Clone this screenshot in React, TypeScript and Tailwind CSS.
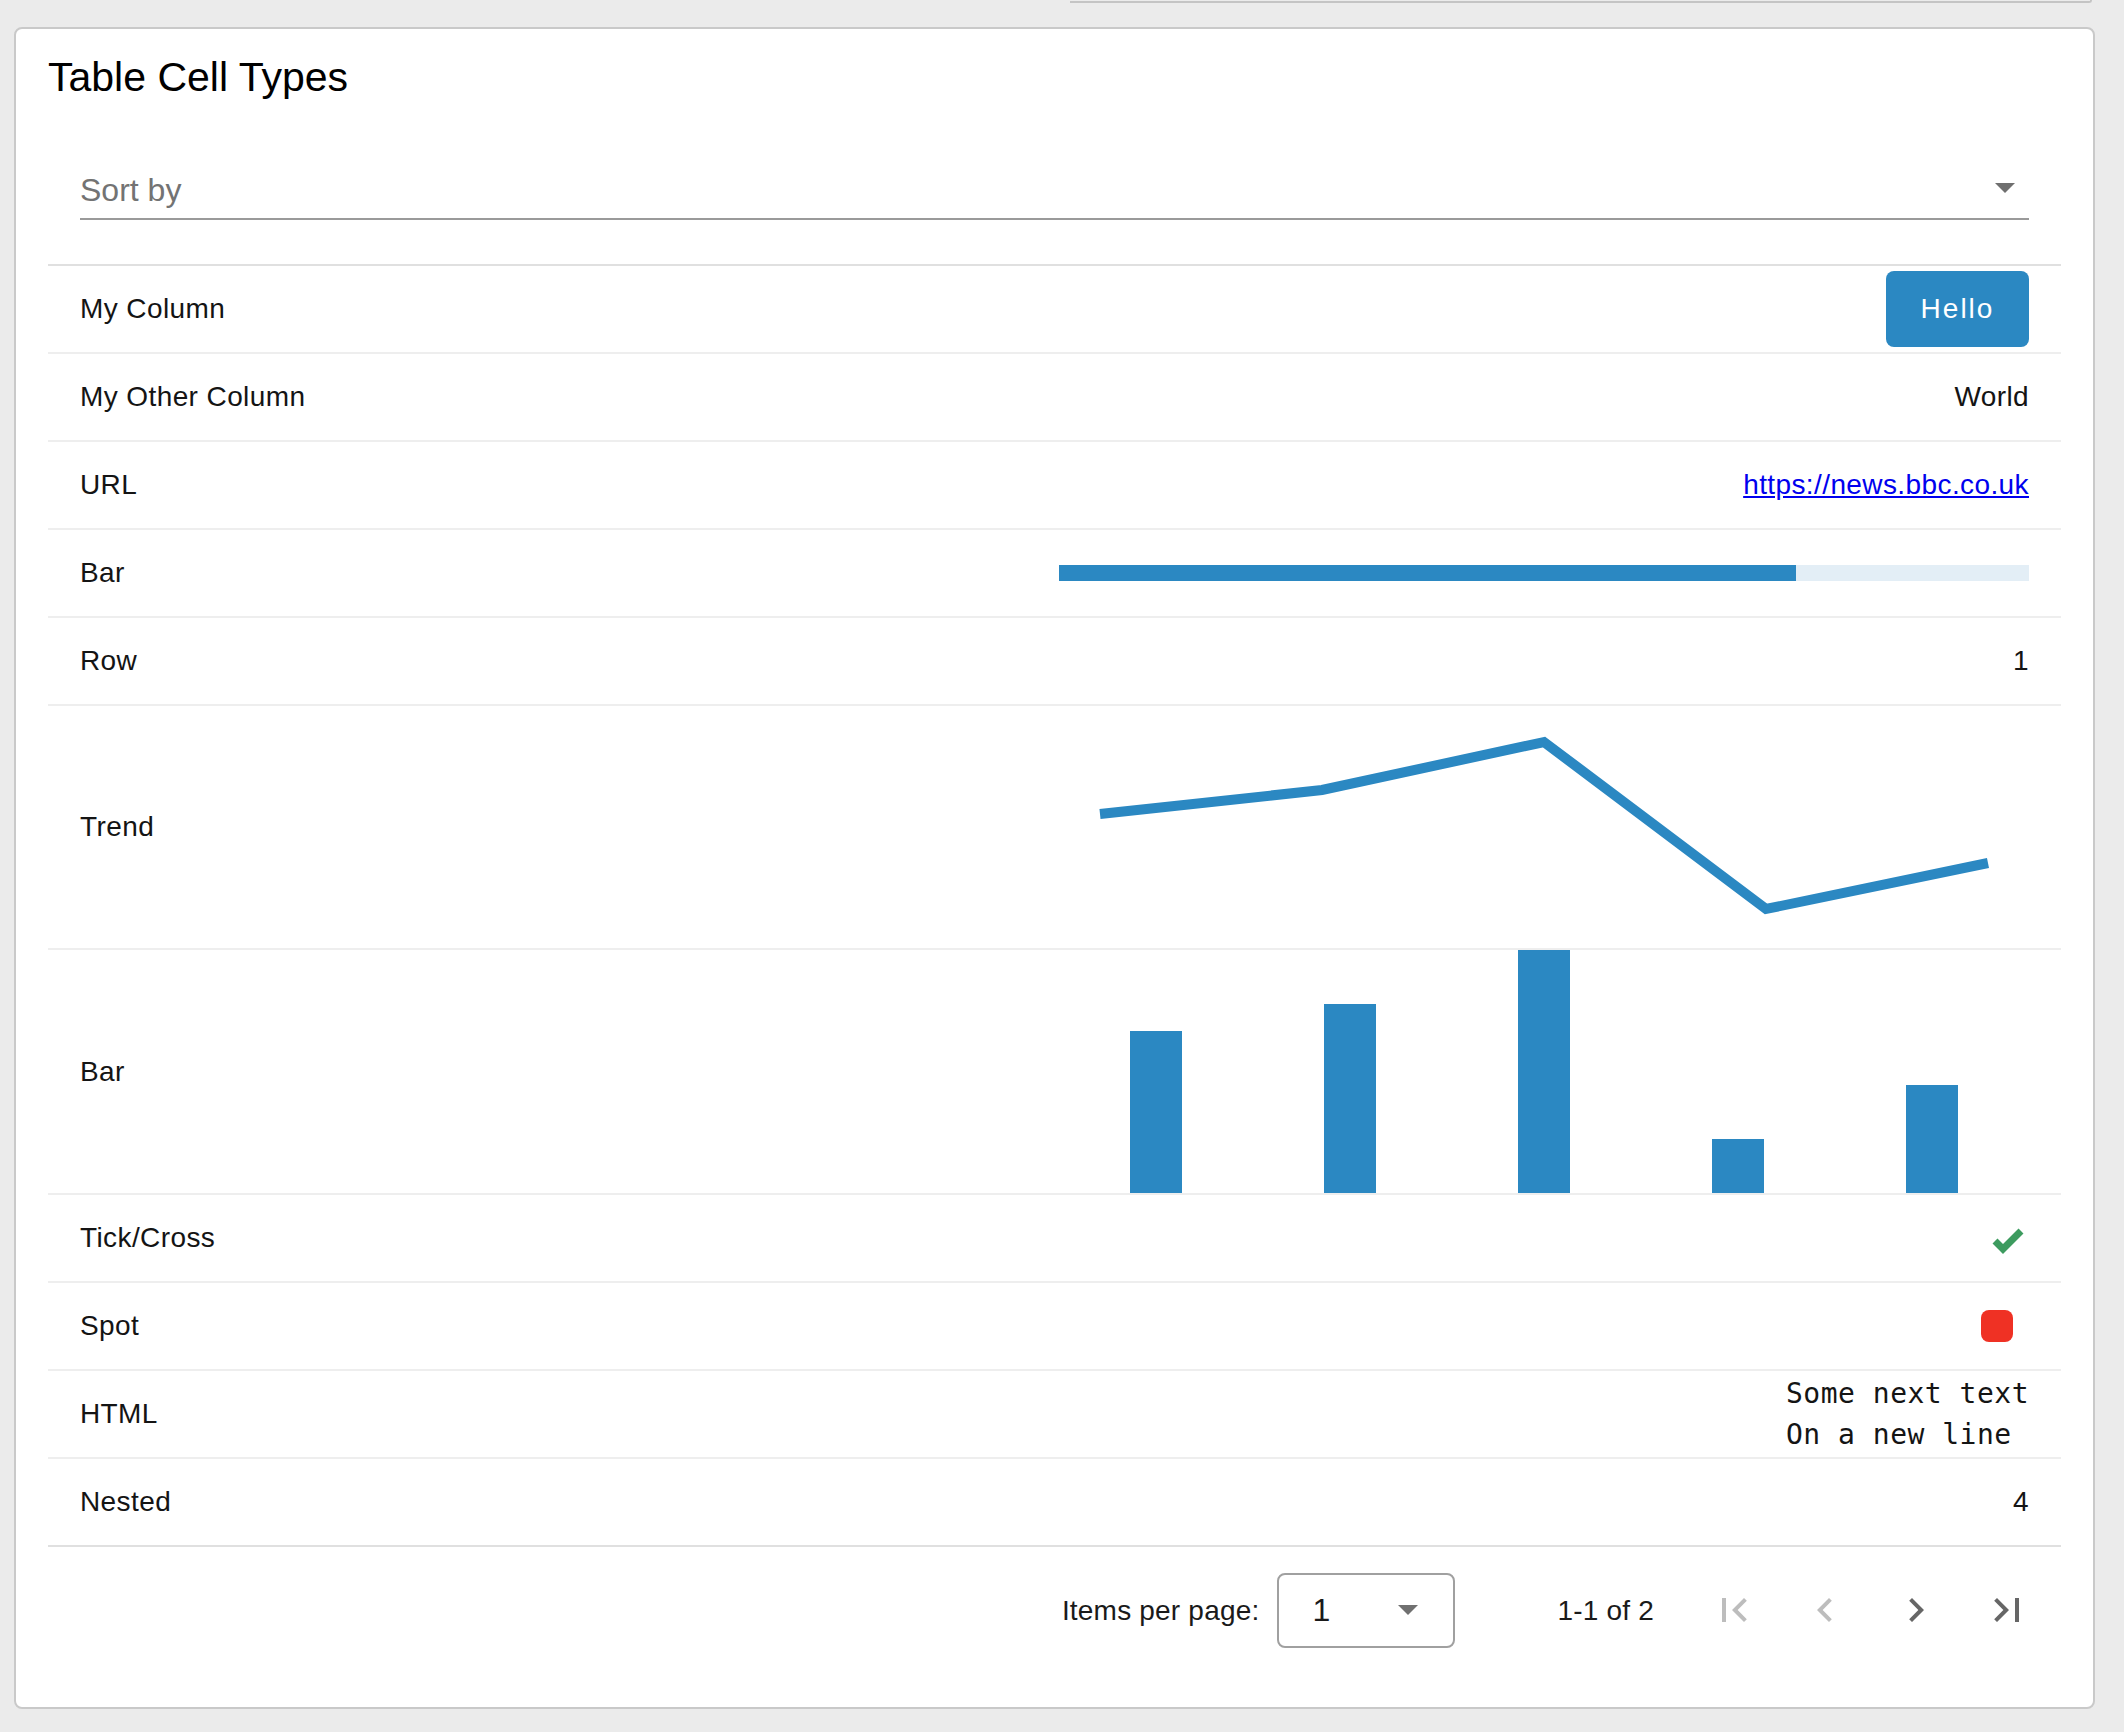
import React from "react";

const BLUE = "#2b88c2";

function Label({ children }: { children: React.ReactNode }) {
  return (
    <div className="flex items-center pl-[32px] text-[28px] tracking-[0.4px] text-[#141414]">
      {children}
    </div>
  );
}

function TrendChart() {
  const pts = [
    [41, 108],
    [263, 84],
    [485, 36],
    [707, 203],
    [929, 157],
  ];
  return (
    <svg width="970" height="242" viewBox="0 0 970 242" className="block">
      <polyline
        points={pts.map((p) => p.join(",")).join(" ")}
        fill="none"
        stroke={BLUE}
        strokeWidth="10"
        strokeLinejoin="miter"
        strokeLinecap="butt"
      />
    </svg>
  );
}

function BarChart() {
  const vals = [3, 3.5, 4.5, 1, 2];
  return (
    <svg width="970" height="243" viewBox="0 0 970 243" className="block">
      {vals.map((v, i) => {
        const h = v * 54;
        const cx = 97 + i * 194;
        return <rect key={i} x={cx - 26} y={243 - h} width="52" height={h} fill={BLUE} />;
      })}
    </svg>
  );
}

function NavIcon({ d, color }: { d: string; color: string }) {
  return (
    <div className="w-[91px] h-[80px] flex items-center justify-center">
      <svg width="48" height="48" viewBox="0 0 24 24">
        <path d={d} fill={color} />
      </svg>
    </div>
  );
}

export default function App() {
  const cellText = "text-[28px] tracking-[0.4px] text-[#141414]";
  return (
    <div className="min-h-[1732px] bg-[#ebebeb] overflow-hidden font-['Liberation_Sans',Arial,sans-serif]">
      <div className="h-[3px] flex">
        <div className="ml-[1070px] w-[1022px] h-[3px] border-b-2 border-r-2 border-[#c4c4c4] rounded-br-[6px]" />
      </div>
      <div className="mt-[24px] ml-[14px] w-[2081px] bg-white border-2 border-[#c9c9c9] rounded-[8px] px-[32px] pt-[24px] pb-[34px]">
        <div className="text-[41px] leading-[48px] text-black">Table Cell Types</div>

        <div className="mt-[69px] mx-[32px] flex items-center justify-between pb-[8px] border-b-2 border-[#9a9a9a]">
          <span className="text-[32px] leading-[40px] text-[#737373]">Sort by</span>
          <svg width="20" height="10" viewBox="0 0 20 10" className="mr-[14px] mb-[4px]">
            <path d="M0 0 L20 0 L10 10 Z" fill="#6f6f6f" />
          </svg>
        </div>

        <div className="mt-[44px] border-t-2 border-[#e0e0e0]">
          <div className="grid grid-cols-2 h-[88px] border-b-2 border-[#eeeeee]">
            <Label>My Column</Label>
            <div className="flex items-center justify-end pl-[4px] pr-[32px]">
              <button className="w-[143px] h-[76px] rounded-[8px] bg-[#2b88c2] text-white text-[28px] tracking-[2px]">
                Hello
              </button>
            </div>
          </div>
          <div className="grid grid-cols-2 h-[88px] border-b-2 border-[#eeeeee]">
            <Label>My Other Column</Label>
            <div className={"flex items-center justify-end pl-[4px] pr-[32px] " + cellText}>World</div>
          </div>
          <div className="grid grid-cols-2 h-[88px] border-b-2 border-[#eeeeee]">
            <Label>URL</Label>
            <div className="flex items-center justify-end pl-[4px] pr-[32px] text-[28px] tracking-[0.4px]">
              <a href="#" className="text-[#0000ee] underline">
                https://news.bbc.co.uk
              </a>
            </div>
          </div>
          <div className="grid grid-cols-2 h-[88px] border-b-2 border-[#eeeeee]">
            <Label>Bar</Label>
            <div className="flex items-center justify-end pl-[4px] pr-[32px]">
              <div className="w-full h-[16px] bg-[#e3eef6]">
                <div className="h-full bg-[#2b88c2]" style={{ width: "76%" }} />
              </div>
            </div>
          </div>
          <div className="grid grid-cols-2 h-[88px] border-b-2 border-[#eeeeee]">
            <Label>Row</Label>
            <div className={"flex items-center justify-end pl-[4px] pr-[32px] " + cellText}>1</div>
          </div>
          <div className="grid grid-cols-2 h-[244px] border-b-2 border-[#eeeeee]">
            <Label>Trend</Label>
            <div className="flex items-start justify-end pl-[4px] pr-[32px]">
              <TrendChart />
            </div>
          </div>
          <div className="grid grid-cols-2 h-[245px] border-b-2 border-[#eeeeee]">
            <Label>Bar</Label>
            <div className="flex items-start justify-end pl-[4px] pr-[32px]">
              <BarChart />
            </div>
          </div>
          <div className="grid grid-cols-2 h-[88px] border-b-2 border-[#eeeeee]">
            <Label>Tick/Cross</Label>
            <div className="flex items-center justify-end pl-[4px] pr-[32px]">
              <svg width="44" height="44" viewBox="0 0 44 44">
                <polyline
                  points="10,25 18,33 36,15"
                  fill="none"
                  stroke="#3d9b5f"
                  strokeWidth="7"
                  strokeLinecap="butt"
                  strokeLinejoin="miter"
                />
              </svg>
            </div>
          </div>
          <div className="grid grid-cols-2 h-[88px] border-b-2 border-[#eeeeee]">
            <Label>Spot</Label>
            <div className="flex items-center justify-end pl-[4px] pr-[32px]">
              <div className="mr-[16px] w-[32px] h-[32px] rounded-[8px] bg-[#ef3124]" />
            </div>
          </div>
          <div className="grid grid-cols-2 h-[88px] border-b-2 border-[#eeeeee]">
            <Label>HTML</Label>
            <div className="flex items-center justify-end pl-[4px] pr-[32px]">
              <div className="font-['DejaVu_Sans_Mono',monospace] text-[28px] leading-[41px] tracking-[0.5px] text-[#141414] whitespace-pre">
                <div>Some next text</div>
                <div>On a new line</div>
              </div>
            </div>
          </div>
          <div className="grid grid-cols-2 h-[88px] border-b-2 border-[#e0e0e0]">
            <Label>Nested</Label>
            <div className={"flex items-center justify-end pl-[4px] pr-[32px] " + cellText}>4</div>
          </div>
        </div>

        <div className="h-[126px] flex items-center justify-end pr-[9px] text-[#1a1a1a]">
          <span className="text-[28px] tracking-[0.2px] mr-[18px] mt-[2px]">Items per page:</span>
          <div className="w-[178px] h-[75px] border-2 border-[#a0a0a0] rounded-[8px] flex items-center justify-between pl-[33px] pr-[35px]">
            <span className="text-[32px]">1</span>
            <svg width="20" height="10" viewBox="0 0 20 10">
              <path d="M0 0 L20 0 L10 10 Z" fill="#707070" />
            </svg>
          </div>
          <span className="text-[28px] tracking-[0.2px] ml-[102px] mr-[34px] mt-[2px]">1-1 of 2</span>
          <NavIcon d="M18.41 16.59L13.82 12l4.59-4.59L17 6l-6 6 6 6zM6 6h2v12H6z" color="#bdbdbd" />
          <NavIcon d="M15.41 7.41L14 6l-6 6 6 6 1.41-1.41L10.83 12z" color="#bdbdbd" />
          <NavIcon d="M10 6L8.59 7.41 13.17 12l-4.58 4.59L10 18l6-6z" color="#666666" />
          <NavIcon d="M5.59 7.41L10.18 12l-4.59 4.59L7 18l6-6-6-6zM16 6h2v12h-2z" color="#666666" />
        </div>
      </div>
    </div>
  );
}
